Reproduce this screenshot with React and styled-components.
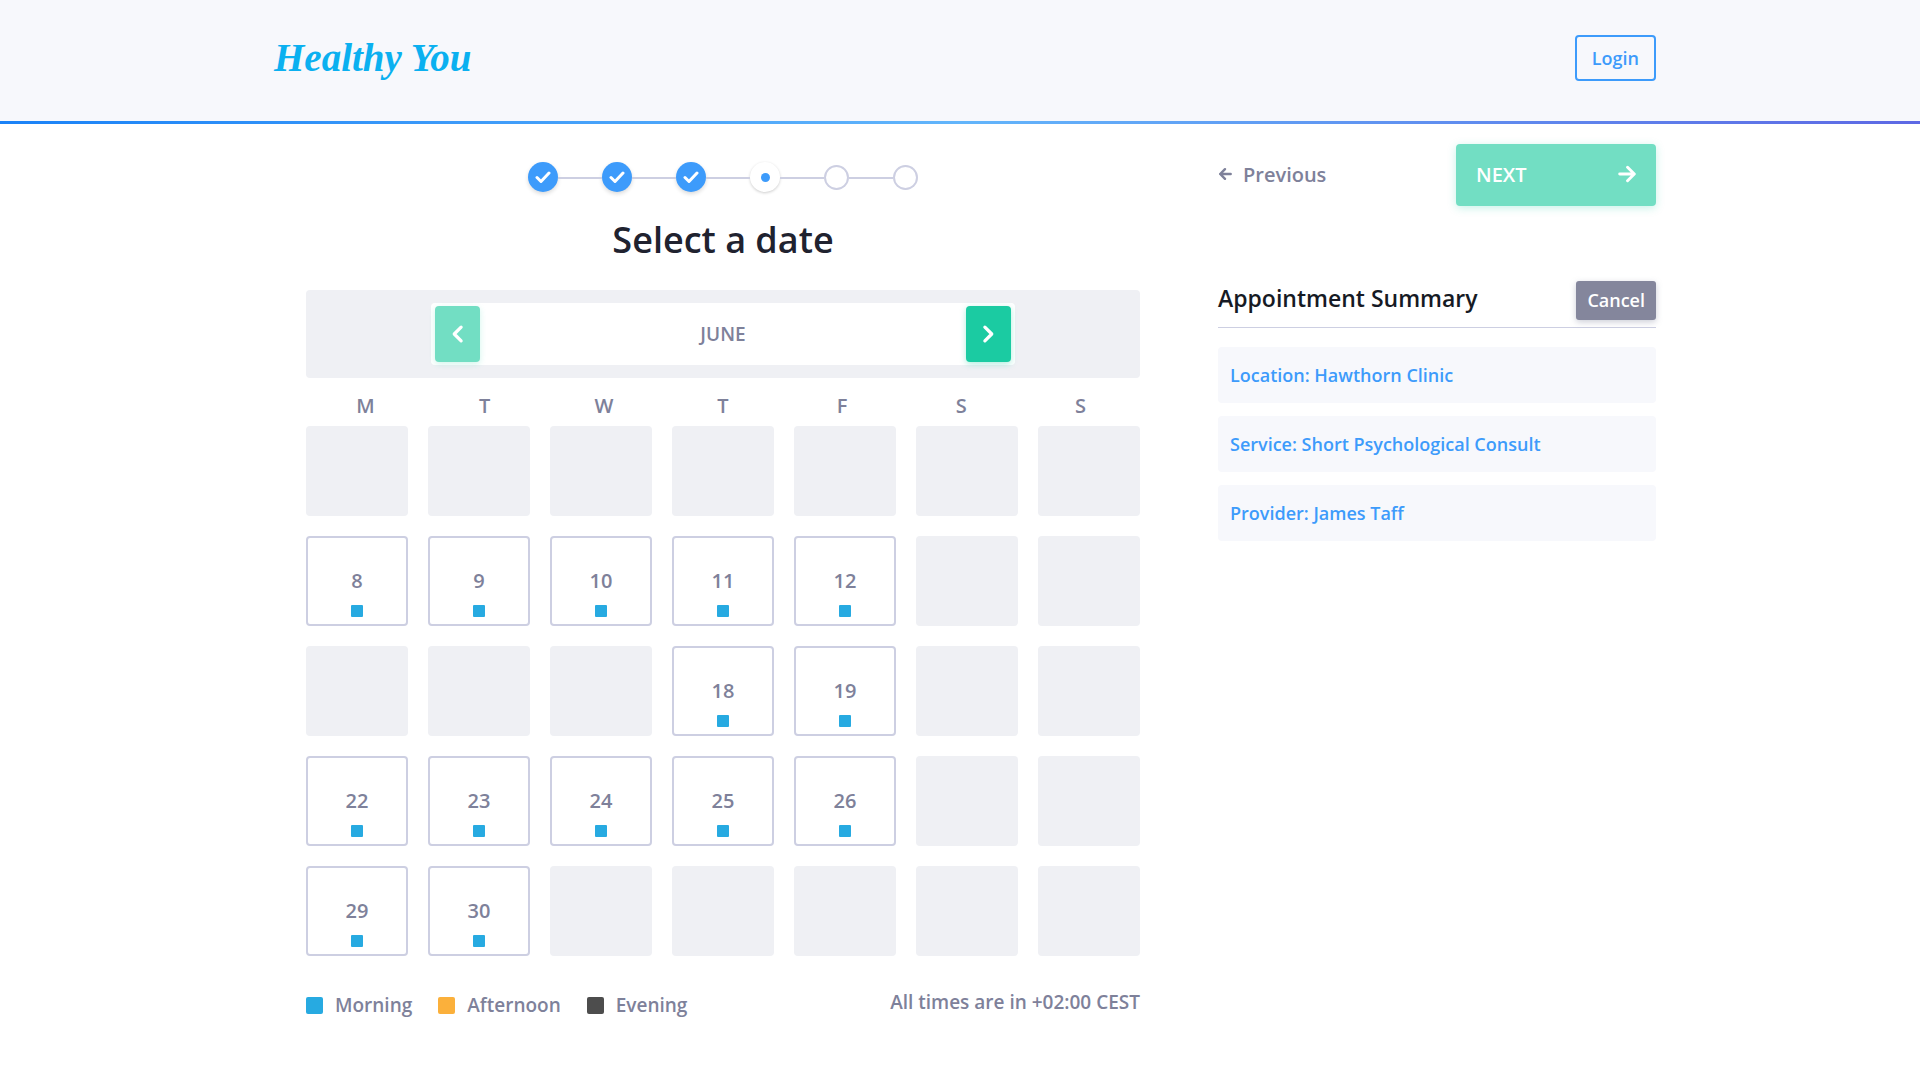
import React from 'react';
import styled, { createGlobalStyle } from 'styled-components';

const GlobalStyle = createGlobalStyle`
  * {
    box-sizing: border-box;
  }
  body {
    margin: 0;
    background: #fff;
    color: #7e819a;
    font-family: "Open Sans", "Noto Sans", sans-serif;
    font-size: 20px;
    font-weight: 600;
    line-height: 28px;
  }
  button {
    font-family: inherit;
    font-weight: inherit;
    cursor: pointer;
  }
  h1, h2, p, ul, ol {
    margin: 0;
    padding: 0;
  }
`;

const weekdays = ['M', 'T', 'W', 'T', 'F', 'S', 'S'];

// null is a day that can't be booked
const days = [
  null, null, null, null, null, null, null,
  8, 9, 10, 11, 12, null, null,
  null, null, null, 18, 19, null, null,
  22, 23, 24, 25, 26, null, null,
  29, 30, null, null, null, null, null,
];

const steps = ['done', 'done', 'done', 'current', 'todo', 'todo'];

const legend = [
  { label: 'Morning', color: '#27aae1' },
  { label: 'Afternoon', color: '#fbb03b' },
  { label: 'Evening', color: '#4d4d4d' },
];

const summary = [
  'Location: Hawthorn Clinic',
  'Service: Short Psychological Consult',
  'Provider: James Taff',
];

const Stroke = ({ size, width, children }) => (
  <svg
    width={size}
    height={size}
    viewBox="0 0 16 16"
    fill="none"
    stroke="currentColor"
    strokeWidth={width}
    strokeLinecap="round"
    strokeLinejoin="round"
    aria-hidden="true"
  >
    {children}
  </svg>
);

const Step = ({ state }) => {
  if (state === 'done') {
    return (
      <StepDone>
        <Stroke size={16} width={3}>
          <path d="M2 8.5L6 12.5L14 4" />
        </Stroke>
      </StepDone>
    );
  }
  if (state === 'current') {
    return <StepCurrent aria-current="step"><StepDot /></StepCurrent>;
  }
  return <StepTodo />;
};

const App = () => (
  <>
    <GlobalStyle />
    <Header>
      <HeaderInner>
        <Logo href="#home">Healthy You</Logo>
        <LoginButton type="button">Login</LoginButton>
      </HeaderInner>
    </Header>

    <Main>
      <Booking>
        <Stepper>
          {steps.map((state, i) => <Step key={i} state={state} />)}
        </Stepper>
        <Title>Select a date</Title>

        <MonthBar>
          <MonthPicker>
            <MonthButton type="button" $faded aria-label="Previous month">
              <Stroke size={20} width={2.6}>
                <path d="M10.5 2.5L5 8L10.5 13.5" />
              </Stroke>
            </MonthButton>
            <span>JUNE</span>
            <MonthButton type="button" aria-label="Next month">
              <Stroke size={20} width={2.6}>
                <path d="M5.5 2.5L11 8L5.5 13.5" />
              </Stroke>
            </MonthButton>
          </MonthPicker>
        </MonthBar>

        <Weekdays>
          {weekdays.map((d, i) => <span key={i}>{d}</span>)}
        </Weekdays>
        <Days>
          {days.map((day, i) => (
            day
              ? <Day key={i} type="button">{day}<Slot /></Day>
              : <EmptyDay key={i} />
          ))}
        </Days>

        <Footer>
          <Legend>
            {legend.map(item => (
              <LegendItem key={item.label}>
                <Swatch $color={item.color} />
                {item.label}
              </LegendItem>
            ))}
          </Legend>
          <p>All times are in +02:00 CEST</p>
        </Footer>
      </Booking>

      <Side>
        <Nav>
          <PreviousButton type="button">
            <Stroke size={14} width={2.8}>
              <path d="M14.5 8H2.5M8 2.5L2.5 8L8 13.5" />
            </Stroke>
            Previous
          </PreviousButton>
          <NextButton type="button">
            NEXT
            <Stroke size={18} width={2.6}>
              <path d="M1.5 8H14M8.5 2L14.5 8L8.5 14" />
            </Stroke>
          </NextButton>
        </Nav>
        <SummaryHead>
          <SummaryTitle>Appointment Summary</SummaryTitle>
          <CancelButton type="button">Cancel</CancelButton>
        </SummaryHead>
        <SummaryList>
          {summary.map(text => <SummaryItem key={text}>{text}</SummaryItem>)}
        </SummaryList>
      </Side>
    </Main>
  </>
);

const Header = styled.header`
  background: #f7f8fc;
  border-bottom: 3px solid;
  border-image: linear-gradient(90deg, #1a82f7, #62b5fb 50%, #5d68e4) 1;
`;

const HeaderInner = styled.div`
  display: flex;
  justify-content: space-between;
  align-items: flex-start;
  max-width: 1392px;
  min-height: 121px;
  margin: 0 auto;
  padding: 35px 0 40px 10px;
`;

const Logo = styled.a`
  color: #0bb0f0;
  font-family: "Liberation Serif", cursive;
  font-size: 39px;
  font-style: italic;
  line-height: 46px;
  text-decoration: none;
`;

const LoginButton = styled.button`
  height: 46px;
  padding: 0 15px;
  border: 2px solid #3d9bfb;
  border-radius: 4px;
  background: transparent;
  color: #3d9bfb;
  font-size: 18px;
`;

const Main = styled.main`
  display: grid;
  grid-template-columns: minmax(0, 1fr) 438px;
  column-gap: 36px;
  max-width: 1392px;
  margin: 0 auto;
  padding-bottom: 48px;
`;

const Booking = styled.section`
  padding: 38px 42px 0;
`;

const Stepper = styled.ol`
  display: flex;
  justify-content: center;
  align-items: center;
  list-style: none;

  li + li::before {
    content: "";
    position: absolute;
    right: 100%;
    top: 50%;
    width: 44px;
    height: 2px;
    background: #cdcfe2;
  }
`;

const StepBase = styled.li`
  position: relative;
  display: flex;
  justify-content: center;
  align-items: center;
  width: 30px;
  height: 30px;
  border-radius: 50%;

  & + & {
    margin-left: 44px;
  }
`;

const StepDone = styled(StepBase)`
  background: #3d9bfb;
  color: #fff;
  box-shadow: 0 2px 4px rgba(0, 0, 0, .15);
`;

const StepCurrent = styled(StepBase)`
  margin-left: 44px;
  background: #fff;
  box-shadow: 0 1px 3px rgba(0, 0, 0, .2);
`;

const StepTodo = styled(StepBase)`
  width: 25px;
  height: 25px;
  margin-left: 44px;
  box-shadow: inset 0 0 0 2px #cdcfe2;
`;

const StepDot = styled.span`
  width: 9px;
  height: 9px;
  border-radius: 50%;
  background: #3d9bfb;
`;

const Title = styled.h1`
  margin: 23px 0 25px;
  color: #20222f;
  font-size: 36px;
  font-weight: 600;
  line-height: 50px;
  text-align: center;
`;

const MonthBar = styled.div`
  display: flex;
  justify-content: center;
  padding: 13px 0;
  border-radius: 4px;
  background: #eff0f4;
  font-size: 19px;
`;

const MonthPicker = styled.div`
  display: flex;
  justify-content: space-between;
  align-items: center;
  width: 70%;
  padding: 3px 4px;
  border-radius: 4px;
  background: #fff;
`;

const MonthButton = styled.button`
  display: flex;
  justify-content: center;
  align-items: center;
  width: 45px;
  height: 56px;
  padding: 0;
  border: 0;
  border-radius: 4px;
  background: ${props => (props.$faded ? '#72dec3' : '#1bcba2')};
  color: #fff;
  box-shadow: 0 2px 6px ${props => (props.$faded ? 'rgba(27, 203, 162, .2)' : 'rgba(27, 203, 162, .35)')};
`;

const Weekdays = styled.div`
  display: grid;
  grid-template-columns: repeat(7, 1fr);
  padding: 14px 0 6px;
  text-align: center;
`;

const Days = styled.div`
  display: grid;
  grid-template-columns: repeat(7, 1fr);
  gap: 20px;
`;

const EmptyDay = styled.div`
  height: 90px;
  border-radius: 4px;
  background: #eff0f4;
`;

const Day = styled.button`
  display: flex;
  flex-direction: column;
  justify-content: flex-end;
  align-items: center;
  gap: 10px;
  height: 90px;
  padding: 0 0 7px;
  border: 2px solid #cdcfe2;
  border-radius: 4px;
  background: #fff;
  color: #7e819a;
  font-size: 20px;
  line-height: 28px;
`;

const Slot = styled.span`
  width: 12px;
  height: 12px;
  border-radius: 1px;
  background: #27aae1;
`;

const Footer = styled.div`
  display: flex;
  justify-content: space-between;
  align-items: flex-start;
  margin-top: 32px;
  font-size: 19px;
`;

const Legend = styled.ul`
  display: flex;
  gap: 26px;
  padding-top: 3px;
  list-style: none;
`;

const LegendItem = styled.li`
  display: flex;
  align-items: center;
  gap: 12px;
`;

const Swatch = styled.span`
  width: 17px;
  height: 17px;
  border-radius: 2px;
  background: ${props => props.$color};
`;

const Side = styled.aside`
  padding-top: 20px;
`;

const Nav = styled.div`
  display: flex;
  justify-content: space-between;
  align-items: center;
`;

const PreviousButton = styled.button`
  display: flex;
  align-items: center;
  gap: 11px;
  padding: 0 0 2px;
  border: 0;
  background: none;
  color: #7e819a;
  font-size: 20px;
`;

const NextButton = styled.button`
  display: flex;
  justify-content: space-between;
  align-items: center;
  width: 200px;
  height: 62px;
  padding: 0 20px 2px;
  border: 0;
  border-radius: 4px;
  background: #72dec3;
  color: #fff;
  font-size: 20px;
  box-shadow: 0 2px 8px rgba(27, 203, 162, .25);
`;

const SummaryHead = styled.div`
  display: flex;
  justify-content: space-between;
  align-items: flex-start;
  margin: 75px 0 19px;
  padding-bottom: 7px;
  border-bottom: 1px solid #cdcfe2;
`;

const SummaryTitle = styled.h2`
  color: #161a24;
  font-size: 23px;
  font-weight: 600;
  line-height: 34px;
`;

const CancelButton = styled.button`
  height: 39px;
  padding: 0 11px 2px;
  border: 0;
  border-radius: 3px;
  background: #84869c;
  color: #fff;
  font-size: 18px;
  box-shadow: 0 2px 6px rgba(126, 129, 154, .4);
`;

const SummaryList = styled.ul`
  display: grid;
  gap: 13px;
  list-style: none;
`;

const SummaryItem = styled.li`
  padding: 14px 12px;
  border-radius: 4px;
  background: #f7f8fc;
  color: #3d9bfb;
  font-size: 18px;
`;

export default App;
